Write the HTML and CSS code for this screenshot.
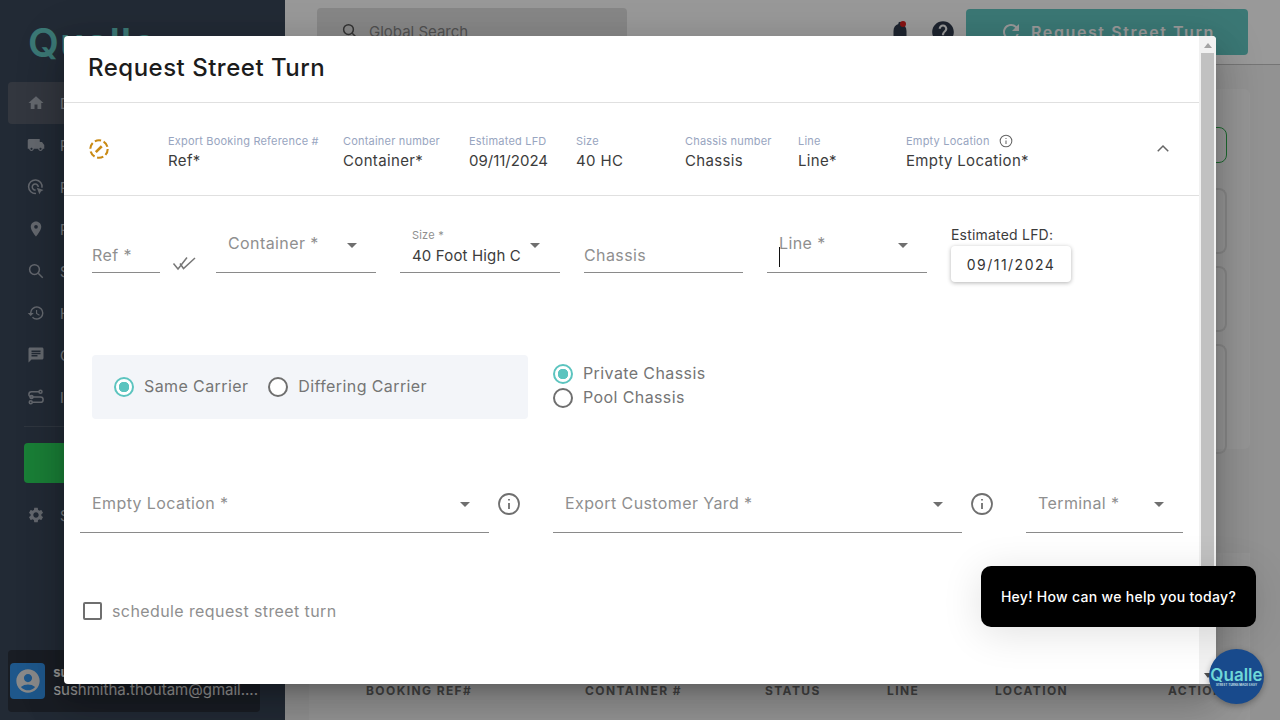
FILE: index.html
```html
<!DOCTYPE html>
<html lang="en">
<head>
    <meta charset="UTF-8">
    <title>Request Street Turn</title>
    <link rel="stylesheet" href="styles.css">
</head>
<body>
    <div class="app">
        <aside class="sidebar">
            <div class="logo">Qualle</div>
            <nav class="nav">
                <div class="nav-item nav-active"><svg viewBox="0 0 24 24"><path d="M10 20v-6h4v6h5v-8h3L12 3 2 12h3v8z"/></svg><span>Dashboard</span></div>
                <div class="nav-item"><svg viewBox="0 0 24 24"><path d="M20 8h-3V4H3c-1.1 0-2 .9-2 2v11h2c0 1.66 1.34 3 3 3s3-1.34 3-3h6c0 1.66 1.34 3 3 3s3-1.34 3-3h2v-5l-3-4zM6 18.5c-.83 0-1.5-.67-1.5-1.5s.67-1.5 1.5-1.5 1.5.67 1.5 1.5-.67 1.5-1.5 1.5zm12 0c-.83 0-1.5-.67-1.5-1.5s.67-1.5 1.5-1.5 1.5.67 1.5 1.5-.67 1.5-1.5 1.5z"/></svg><span>Requests</span></div>
                <div class="nav-item"><svg viewBox="0 0 24 24" class="line-icon"><path d="M20 13A9 9 0 1 0 12 20.500"/><path d="M15 12a4 4 0 1 0-3.500 4"/><path d="M13 13l9 3-3.500 2-2 3.500z" class="solid"/></svg><span>Radar</span></div>
                <div class="nav-item"><svg viewBox="0 0 24 24"><path d="M12 2C8.13 2 5 5.13 5 9c0 5.25 7 13 7 13s7-7.75 7-13c0-3.87-3.13-7-7-7zm0 9.5a2.5 2.5 0 0 1 0-5 2.5 2.5 0 0 1 0 5z"/></svg><span>Pins</span></div>
                <div class="nav-item"><svg viewBox="0 0 24 24" class="line-icon"><circle cx="10" cy="10" r="6.500"/><path d="M15 15l6 6"/></svg><span>Search</span></div>
                <div class="nav-item"><svg viewBox="0 0 24 24"><path d="M13 3a9 9 0 0 0-9 9H1l3.89 3.89.07.14L9 12H6c0-3.87 3.13-7 7-7s7 3.13 7 7-3.13 7-7 7c-1.93 0-3.68-.79-4.94-2.06l-1.42 1.42A8.954 8.954 0 0 0 13 21a9 9 0 0 0 0-18zm-1 5v5l4.28 2.54.72-1.21-3.5-2.08V8H12z"/></svg><span>History</span></div>
                <div class="nav-item"><svg viewBox="0 0 24 24"><path d="M20 2H4c-1.1 0-2 .9-2 2v18l4-4h14c1.1 0 2-.9 2-2V4c0-1.1-.9-2-2-2zM6 9h12v2H6V9zm8 5H6v-2h8v2zm4-6H6V6h12v2z"/></svg><span>Chat</span></div>
                <div class="nav-item"><svg viewBox="0 0 24 24" class="line-icon"><circle cx="18" cy="5" r="2"/><circle cx="6" cy="12" r="2"/><circle cx="5" cy="19" r="2"/><path d="M16 5H6a3.500 3.500 0 0 0 0 7h12a3.500 3.500 0 0 1 0 7H7"/></svg><span>Integrations</span></div>
            </nav>
            <div class="nav-rule"></div>
            <div class="green-btn"></div>
            <div class="nav-item"><svg viewBox="0 0 24 24"><path d="M19.14 12.94c.04-.3.06-.61.06-.94 0-.32-.02-.64-.07-.94l2.03-1.58a.49.49 0 0 0 .12-.61l-1.92-3.32a.488.488 0 0 0-.59-.22l-2.39.96c-.5-.38-1.03-.7-1.62-.94l-.36-2.54a.484.484 0 0 0-.48-.41h-3.84c-.24 0-.43.17-.47.41l-.36 2.54c-.59.24-1.13.57-1.62.94l-2.39-.96c-.22-.08-.47 0-.59.22L2.74 8.87c-.12.21-.08.47.12.61l2.03 1.58c-.05.3-.09.63-.09.94s.02.64.07.94l-2.03 1.58a.49.49 0 0 0-.12.61l1.92 3.32c.12.22.37.29.59.22l2.39-.96c.5.38 1.03.7 1.62.94l.36 2.54c.05.24.24.41.48.41h3.84c.24 0 .44-.17.47-.41l.36-2.54c.59-.24 1.13-.56 1.62-.94l2.39.96c.22.08.47 0 .59-.22l1.92-3.32c.12-.22.07-.47-.12-.61l-2.01-1.58zM12 15.6c-1.98 0-3.6-1.62-3.6-3.6s1.62-3.6 3.6-3.6 3.6 1.62 3.6 3.6-1.62 3.6-3.6 3.6z"/></svg><span>Settings</span></div>
            <div class="user-box">
                <div class="avatar"><svg viewBox="0 0 24 24"><path d="M12 2C6.48 2 2 6.48 2 12s4.48 10 10 10 10-4.48 10-10S17.52 2 12 2zm0 4c1.93 0 3.5 1.57 3.5 3.5S13.93 13 12 13s-3.5-1.57-3.5-3.5S10.07 6 12 6zm0 14c-2.03 0-4.43-.82-6.14-2.88a9.947 9.947 0 0 1 12.28 0C16.43 19.18 14.03 20 12 20z"/></svg></div>
                <div class="user-text">
                    <div class="user-name">sushmitha</div>
                    <div class="user-mail">sushmitha.thoutam@gmail....</div>
                </div>
            </div>
        </aside>
        <main class="main">
            <header class="topbar">
                <div class="search"><svg viewBox="0 0 24 24"><circle cx="10" cy="10" r="6.500"/><path d="M15 15l6 6"/></svg><span>Global Search</span></div>
                <div class="top-icons">
                    <div class="bell"><svg viewBox="0 0 24 24"><path d="M12 22c1.1 0 2-.9 2-2h-4c0 1.1.9 2 2 2zm6-6v-5c0-3.07-1.63-5.64-4.5-6.32V4a1.5 1.5 0 0 0-3 0v.68C7.64 5.36 6 7.92 6 11v5l-2 2v1h16v-1z"/></svg><i class="bell-dot"></i></div>
                    <svg class="help" viewBox="0 0 24 24"><path d="M12 2C6.48 2 2 6.48 2 12s4.48 10 10 10 10-4.48 10-10S17.52 2 12 2zm1 17h-2v-2h2v2zm2.07-7.75-.9.92C13.45 12.9 13 13.5 13 15h-2v-.5c0-1.1.45-2.1 1.17-2.83l1.24-1.26c.37-.36.59-.86.59-1.41 0-1.1-.9-2-2-2s-2 .9-2 2H8c0-2.21 1.79-4 4-4s4 1.79 4 4c0 .88-.36 1.68-.93 2.25z"/></svg>
                    <div class="request-btn"><svg viewBox="0 0 24 24"><path d="M17.65 6.35A7.958 7.958 0 0 0 12 4c-4.42 0-7.99 3.58-7.99 8s3.57 8 7.99 8c3.73 0 6.84-2.55 7.73-6h-2.08A5.99 5.99 0 0 1 12 18c-3.31 0-6-2.69-6-6s2.69-6 6-6c1.66 0 3.14.69 4.22 1.78L13 11h7V4l-2.35 2.35z"/></svg><span>Request Street Turn</span></div>
                </div>
            </header>
            <section class="back-content">
                <div class="back-panel">
                    <div class="back-card back-green"></div>
                    <div class="back-card"></div>
                    <div class="back-card"></div>
                    <div class="back-card back-tall"></div>
                </div>
                <div class="back-table">
                    <span>BOOKING REF#</span><span>CONTAINER #</span><span>STATUS</span><span>LINE</span><span>LOCATION</span><span>ACTION</span>
                </div>
            </section>
        </main>
    </div>

    <div class="backdrop"></div>

    <div class="modal">
        <div class="modal-scroll">
            <h2 class="modal-title">Request Street Turn</h2>
            <div class="summary">
                <svg class="edit-icon" viewBox="0 0 24 24"><circle cx="12" cy="12" r="9.500" stroke-dasharray="7 2.950"/><path d="M8.500 15.500L15 9" class="pencil"/></svg>
                <div class="sum-col sum-ref"><label>Export Booking Reference #</label><div>Ref*</div></div>
                <div class="sum-col sum-cont"><label>Container number</label><div>Container*</div></div>
                <div class="sum-col sum-lfd"><label>Estimated LFD</label><div class="sum-date">09/11/2024</div></div>
                <div class="sum-col sum-size"><label>Size</label><div>40 HC</div></div>
                <div class="sum-col sum-chassis"><label>Chassis number</label><div>Chassis</div></div>
                <div class="sum-col sum-line"><label>Line</label><div>Line*</div></div>
                <div class="sum-col sum-empty">
                    <label>Empty Location <svg class="info-small" viewBox="0 0 24 24"><circle cx="12" cy="12" r="10"/><path d="M12 11v6M12 7v1.500"/></svg></label>
                    <div>Empty Location*</div>
                </div>
                <svg class="chevron" viewBox="0 0 24 24"><path d="M5 15l7-7 7 7"/></svg>
            </div>
            <div class="form-row">
                <div class="field field-ref"><span class="ph-low">Ref *</span></div>
                <svg class="checks" viewBox="0 0 24 16"><path d="M1.500 8.500L6 14l9-11.500M8 8.500l3.500 5L23 3"/></svg>
                <div class="field field-md"><span class="ph-high">Container *</span><i class="caret"></i></div>
                <div class="field field-md"><span class="mini-label">Size *</span><span class="field-value">40 Foot High C</span><i class="caret caret-size"></i></div>
                <div class="field field-md field-chassis"><span class="ph-low">Chassis</span></div>
                <div class="field field-md"><span class="ph-high">Line *</span><i class="text-cursor"></i><i class="caret"></i></div>
                <div class="lfd-group">
                    <div class="lfd-label">Estimated LFD:</div>
                    <div class="lfd-box">09/11/2024</div>
                </div>
            </div>
            <div class="radio-row">
                <div class="carrier-box">
                    <div class="radio-opt"><i class="radio radio-on"></i>Same Carrier</div>
                    <div class="radio-opt"><i class="radio"></i>Differing Carrier</div>
                </div>
                <div class="chassis-opts">
                    <div class="radio-opt"><i class="radio radio-on"></i>Private Chassis</div>
                    <div class="radio-opt"><i class="radio"></i>Pool Chassis</div>
                </div>
            </div>
            <div class="loc-row">
                <div class="field field-empty"><span class="ph-high">Empty Location *</span><i class="caret"></i></div>
                <svg class="info" viewBox="0 0 24 24"><circle cx="12" cy="12" r="10"/><path d="M12 11v6M12 7v1.500"/></svg>
                <div class="field field-yard"><span class="ph-high">Export Customer Yard *</span><i class="caret"></i></div>
                <svg class="info" viewBox="0 0 24 24"><circle cx="12" cy="12" r="10"/><path d="M12 11v6M12 7v1.500"/></svg>
                <div class="field field-term"><span class="ph-high">Terminal *</span><i class="caret"></i></div>
            </div>
            <div class="schedule"><i class="checkbox"></i>schedule request street turn</div>
        </div>
        <div class="scrollbar"><i class="sb-up"></i><i class="sb-thumb"></i><i class="sb-down"></i></div>
    </div>

    <div class="chat-bubble">Hey! How can we help you today?</div>
    <div class="chat-fab"><span>Qualle</span><small>STREET TURNS MADE EASY</small></div>
</body>
</html>
```
FILE: styles.css
```css
* {
    box-sizing: border-box;
}
body {
    margin: 0;
    width: 1280px;
    height: 720px;
    overflow: hidden;
    font-family: "Inter", "Noto Sans", sans-serif;
    background-color: #fff;
    color: #222;
}
.app {
    display: flex;
    height: 720px;
}

/* sidebar */
.sidebar {
    width: 285px;
    flex: none;
    background-color: #3a4759;
    padding: 24px 8px 0;
    display: flex;
    flex-direction: column;
    position: relative;
}
.logo {
    font-size: 40px;
    font-weight: 600;
    letter-spacing: 1px;
    color: #63c9c4;
    padding-left: 20px;
    height: 58px;
    line-height: 38px;
}
.nav-item {
    display: flex;
    align-items: center;
    gap: 15px;
    height: 42px;
    padding-left: 19px;
    color: #c9ced6;
    font-size: 14px;
}
.nav-item svg {
    width: 18px;
    height: 18px;
    fill: #a7adb8;
}
.nav-item .line-icon {
    fill: none;
    stroke: #a7adb8;
    stroke-width: 2;
}
.nav-item .line-icon .solid {
    fill: #a7adb8;
    stroke: none;
}
.nav-active {
    background-color: #565d6a;
    border-radius: 4px;
}
.nav-rule {
    height: 1px;
    background-color: #4f5a6a;
    margin: 8px 0 0 16px;
    width: 240px;
}
.green-btn {
    width: 240px;
    height: 40px;
    margin: 16px 0 11px 16px;
    background-color: #2cd45c;
    border-radius: 4px;
}
.user-box {
    position: absolute;
    left: 8px;
    top: 650px;
    width: 252px;
    height: 62px;
    background-color: #2a313c;
    border-radius: 4px;
    display: flex;
    align-items: center;
    gap: 8px;
    padding: 0 2px;
}
.avatar {
    width: 36px;
    height: 36px;
    background-color: #3291e8;
    border-radius: 4px;
    display: flex;
    align-items: center;
    justify-content: center;
}
.avatar svg {
    width: 28px;
    height: 28px;
    fill: #e4e4e4;
}
.user-name {
    font-weight: 700;
    font-size: 13px;
    color: #eee;
}
.user-mail {
    font-size: 15px;
    color: #fff;
}

/* page behind the modal */
.main {
    flex: 1;
    background-color: #f4f4f4;
    display: flex;
    flex-direction: column;
}
.topbar {
    height: 65px;
    border-bottom: 1px solid #c4c4c4;
    background-color: #fff;
    display: flex;
    justify-content: space-between;
    padding: 9px 32px 0;
}
.search {
    width: 310px;
    height: 46px;
    margin-top: -1px;
    background-color: #e2e2e2;
    border-radius: 4px;
    display: flex;
    align-items: center;
    gap: 10px;
    padding-left: 24px;
    font-size: 15px;
    color: #888;
}
.search svg {
    width: 18px;
    height: 18px;
    fill: none;
    stroke: #555;
    stroke-width: 2;
}
.top-icons {
    display: flex;
    align-items: flex-start;
    gap: 12px;
}
.bell {
    position: relative;
    width: 28px;
    height: 44px;
    padding-top: 10px;
}
.bell svg {
    width: 26px;
    height: 26px;
    fill: #323d4f;
}
.bell-dot {
    position: absolute;
    top: 12px;
    right: 9px;
    width: 6px;
    height: 6px;
    border-radius: 50%;
    background-color: #e02020;
}
.help {
    width: 26px;
    height: 26px;
    margin: 10px -2px 0 3px;
    fill: #323d4f;
}
.request-btn {
    width: 282px;
    height: 46px;
    background-color: #63c9c4;
    border-radius: 4px;
    display: flex;
    align-items: center;
    justify-content: center;
    gap: 8px;
    color: #fff;
    font-size: 16px;
    font-weight: 600;
    letter-spacing: 1.6px;
}
.request-btn svg {
    width: 24px;
    height: 24px;
    fill: #fff;
}
.back-content {
    padding: 24px 0 0 24px;
    flex: 1;
}
.back-panel {
    width: 941px;
    height: 360px;
    background-color: #fafafa;
    border-radius: 6px;
    padding: 38px 23px 0 12px;
}
.back-card {
    border: 2px solid #e2e2e2;
    border-radius: 8px;
    height: 66px;
    margin-bottom: 12px;
}
.back-green {
    height: 36px;
    margin-bottom: 25px;
    border-width: 1px;
    border-color: #2fb04e;
}
.back-tall {
    height: 110px;
}
.back-table {
    width: 941px;
    height: 167px;
    margin-top: 104px;
    background-color: #fafafa;
    padding: 130px 0 0 57px;
    display: grid;
    grid-template-columns: 219px 180px 122px 108px 173px 80px;
    font-size: 12px;
    font-weight: 700;
    letter-spacing: 1.4px;
    color: #757575;
}

.backdrop {
    position: absolute;
    inset: 0;
    background-color: rgba(0, 0, 0, 0.4);
}

/* modal */
.modal {
    position: absolute;
    left: 64px;
    top: 36px;
    width: 1152px;
    height: 648px;
    background-color: #fff;
    border-radius: 4px;
    overflow: hidden;
    display: flex;
    box-shadow: 0 11px 15px -7px rgba(0, 0, 0, 0.2), 0 24px 38px 3px rgba(0, 0, 0, 0.14), 0 9px 46px 8px rgba(0, 0, 0, 0.12);
}
.modal-scroll {
    width: 1135px;
    flex: none;
}
.modal-title {
    margin: 0;
    height: 67px;
    padding: 16px 24px 0;
    font-size: 24px;
    font-weight: 500;
    line-height: 32px;
    letter-spacing: 0.5px;
    color: #1c1c1c;
    border-bottom: 1px solid #e0e0e0;
}
.summary {
    height: 93px;
    display: flex;
    align-items: center;
    border-bottom: 1px solid #e0e0e0;
    padding-left: 25px;
    position: relative;
}
.edit-icon {
    position: absolute;
    left: 24px;
    top: 35px;
    width: 22px;
    height: 22px;
    fill: none;
    stroke: #c98a14;
    stroke-width: 2.3;
}
.edit-icon .pencil {
    stroke-width: 2.8;
}
.sum-col {
    position: absolute;
    top: 31px;
    font-size: 15px;
    line-height: 20px;
    letter-spacing: 0.35px;
    color: #3c3c3c;
}
.sum-col label {
    display: block;
    margin-bottom: 3px;
    font-size: 11px;
    line-height: 14px;
    letter-spacing: 0.2px;
    color: #98a5c0;
}
.sum-col .sum-date {
    letter-spacing: 0;
}
.sum-ref { left: 104px; }
.sum-cont { left: 279px; }
.sum-lfd { left: 405px; }
.sum-size { left: 512px; }
.sum-chassis { left: 621px; }
.sum-line { left: 734px; }
.sum-empty { left: 842px; }
.info-small {
    width: 14px;
    height: 14px;
    margin-left: 6px;
    vertical-align: -3px;
    fill: none;
    stroke: #666;
    stroke-width: 1.8;
}
.chevron {
    position: absolute;
    left: 1090px;
    top: 37px;
    width: 18px;
    height: 18px;
    fill: none;
    stroke: #666;
    stroke-width: 2;
}

/* form fields */
.form-row {
    display: flex;
    align-items: flex-start;
    padding: 26px 0 0 28px;
    height: 159px;
}
.field {
    position: relative;
    height: 51px;
    border-bottom: 1px solid #8a8a8a;
    font-size: 16px;
    line-height: 18px;
    letter-spacing: 0.4px;
    color: #8f8f8f;
}
.field-ref {
    width: 68px;
}
.field-md {
    width: 160px;
    margin-right: 24px;
}
.field-chassis {
    width: 159px;
}
.ph-low {
    position: absolute;
    left: 0;
    top: 24px;
}
.ph-high {
    position: absolute;
    left: 12px;
    top: 12px;
}
.mini-label {
    position: absolute;
    left: 12px;
    top: 4px;
    font-size: 11px;
    letter-spacing: 0.2px;
}
.field-value {
    position: absolute;
    left: 12px;
    top: 25px;
    font-size: 15px;
    letter-spacing: 0.15px;
    color: #3c3c3c;
}
.caret {
    position: absolute;
    right: 19px;
    top: 21px;
    width: 0;
    height: 0;
    border-left: 5px solid transparent;
    border-right: 5px solid transparent;
    border-top: 5px solid #6f6f6f;
}
.caret-size {
    right: 20px;
}
.text-cursor {
    position: absolute;
    left: 12px;
    top: 25px;
    width: 1px;
    height: 20px;
    background-color: #111;
}
.checks {
    width: 24px;
    height: 16px;
    margin: 33px 20px 0 12px;
    fill: none;
    stroke: #777;
    stroke-width: 1.5;
}
.lfd-group {
    margin-top: 4px;
}
.lfd-label {
    font-size: 14px;
    line-height: 18px;
    letter-spacing: 0.2px;
    color: #3c3c3c;
}
.lfd-box {
    margin-top: 2px;
    width: 120px;
    height: 36px;
    background-color: #fff;
    border-radius: 4px;
    box-shadow: 0 1px 4px rgba(0, 0, 0, 0.3);
    display: flex;
    align-items: center;
    justify-content: center;
    font-size: 14px;
    letter-spacing: 1.5px;
    color: #333;
}

/* radios */
.radio-row {
    display: flex;
    align-items: flex-start;
    padding-left: 28px;
    height: 112px;
}
.carrier-box {
    width: 436px;
    height: 64px;
    background-color: #f3f5f9;
    border-radius: 4px;
    display: flex;
    align-items: center;
    gap: 20px;
    padding-left: 22px;
}
.radio-opt {
    display: flex;
    align-items: flex-start;
    gap: 10px;
    font-size: 16px;
    line-height: 22px;
    letter-spacing: 0.4px;
    color: #757575;
    height: 24px;
}
.radio {
    width: 20px;
    height: 20px;
    margin-top: 2px;
    border: 2px solid #6f6f6f;
    border-radius: 50%;
    background-color: #fff;
}
.radio-on {
    border-color: #5cc4bf;
    background: radial-gradient(circle, #5cc4bf 0 5px, #fff 5.5px);
}
.chassis-opts {
    margin-left: 25px;
    margin-top: 7px;
}

/* location row */
.loc-row {
    display: flex;
    align-items: flex-start;
    padding-left: 16px;
    height: 134px;
}
.loc-row .field {
    height: 66px;
}
.loc-row .ph-high {
    top: 27px;
}
.loc-row .caret {
    top: 35px;
}
.field-empty {
    width: 409px;
}
.field-yard {
    width: 409px;
}
.field-term {
    width: 157px;
}
.info {
    width: 24px;
    height: 24px;
    margin: 25px 32px 0 8px;
    fill: none;
    stroke: #6f6f6f;
    stroke-width: 1.8;
}
.schedule {
    display: flex;
    align-items: center;
    gap: 10px;
    padding-left: 19px;
    font-size: 16px;
    letter-spacing: 0.4px;
    color: #8f8f8f;
}
.checkbox {
    width: 19px;
    height: 18px;
    border: 2px solid #6f6f6f;
    border-radius: 2px;
}

/* modal scrollbar */
.scrollbar {
    width: 17px;
    background-color: #f1f1f1;
    position: relative;
}
.sb-up {
    position: absolute;
    top: 7px;
    left: 5px;
    border-left: 4px solid transparent;
    border-right: 4px solid transparent;
    border-bottom: 5px solid #a3a3a3;
}
.sb-thumb {
    position: absolute;
    top: 17px;
    left: 2px;
    width: 13px;
    height: 570px;
    background-color: #c1c1c1;
}
.sb-down {
    position: absolute;
    bottom: 6px;
    left: 5px;
    border-left: 4px solid transparent;
    border-right: 4px solid transparent;
    border-top: 5px solid #505050;
}

/* chat widget */
.chat-bubble {
    position: absolute;
    left: 981px;
    top: 566px;
    width: 275px;
    height: 61px;
    background-color: #000;
    border-radius: 10px;
    color: #fff;
    font-size: 14px;
    font-weight: 500;
    letter-spacing: 0.3px;
    display: flex;
    align-items: center;
    justify-content: center;
    box-shadow: 0 6px 40px rgba(0, 0, 0, 0.12);
}
.chat-fab {
    position: absolute;
    left: 1209px;
    top: 649px;
    width: 55px;
    height: 55px;
    border-radius: 50%;
    background-color: #184a8c;
    display: flex;
    flex-direction: column;
    align-items: center;
    justify-content: center;
    color: #6fd8d8;
    font-weight: 600;
    font-size: 17px;
    line-height: 16px;
    box-shadow: 0 2px 6px rgba(0, 0, 0, 0.3);
}
.chat-fab small {
    font-size: 3px;
    line-height: 4px;
    color: #d8f0f0;
}
```
